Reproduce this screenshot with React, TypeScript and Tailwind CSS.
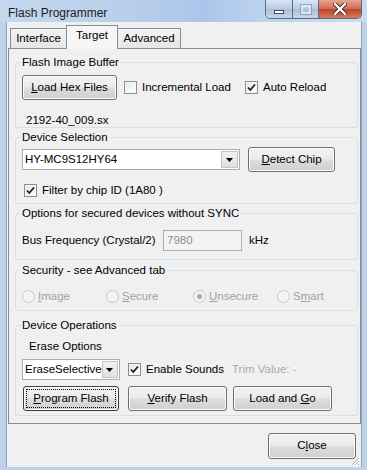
import React from 'react'

const Check = () => (
  <svg width="9" height="9" viewBox="0 0 9 9" className="block">
    <path d="M1 4.5 L3.3 7 L8 1.5" fill="none" stroke="#1c1c1c" strokeWidth="1.8" />
  </svg>
)

const CheckBox = ({ checked }: { checked?: boolean }) => (
  <span className="w-[13px] h-[13px] shrink-0 border border-[#8e8f8f] bg-white flex items-center justify-center">
    <span className="w-[11px] h-[11px] bg-[linear-gradient(135deg,#e6e6e6,#ffffff)] border border-[#f4f4f4] flex items-center justify-center">
      {checked && <Check />}
    </span>
  </span>
)

const Radio = ({ checked }: { checked?: boolean }) => (
  <span className="w-[13px] h-[13px] shrink-0 rounded-full border border-[#c8c8c8] bg-[#f4f4f4] flex items-center justify-center">
    {checked && <span className="w-[5px] h-[5px] rounded-full bg-[#a8a8a8]" />}
  </span>
)

const Btn = ({ children, w, isDefault }: { children: React.ReactNode; w: string; isDefault?: boolean }) => (
  <button
    className={
      'h-[25px] shrink-0 rounded-[3px] border text-[11.5px] text-black shadow-[inset_0_0_0_1px_#fcfcfc] bg-[linear-gradient(#f2f2f2_0%,#ebebeb_48%,#dddddd_52%,#cfcfcf_100%)] p-[3px] ' +
      w +
      (isDefault ? ' border-[#3e3e3e]' : ' border-[#707070]')
    }
  >
    <span
      className={
        'w-full h-full flex items-center justify-center' +
        (isDefault ? ' outline outline-1 outline-dotted outline-black' : '')
      }
    >
      {children}
    </span>
  </button>
)

const Combo = ({ text, w }: { text: string; w: string }) => (
  <div className={'h-[21px] shrink-0 flex items-center bg-white border border-[#abadb3] pl-[2px] pr-[1px] ' + w}>
    <span className="flex-1">{text}</span>
    <span className="w-[17px] h-[17px] border border-[#c4c4c4] bg-[linear-gradient(#f2f2f2,#e0e0e0)] flex items-center justify-center">
      <svg width="7" height="4" viewBox="0 0 7 4">
        <path d="M0 0 H7 L3.5 4 Z" fill="#000" />
      </svg>
    </span>
  </div>
)

const Group = ({ title, h, children, mt }: { title: string; h: string; mt: string; children: React.ReactNode }) => (
  <fieldset className={'border border-[#d5dfe5] rounded-[3px] min-w-0 ' + h + ' ' + mt}>
    <legend className="ml-[4px] px-[2px] leading-[14px]">{title}</legend>
    {children}
  </fieldset>
)

const TitleBar = () => (
  <div className="h-[22px] shrink-0 flex items-start bg-[linear-gradient(90deg,#c4d7ee_0%,#b6cdea_40%,#a9c6ea_55%,#c0d5ee_75%,#cadcf0_100%)]">
    <span className="pl-[8px] pt-[4px] text-[12px] text-[#1b1b1b]">Flash Programmer</span>
    <div className="ml-auto mr-[5px] flex h-[19px] rounded-b-[5px] border border-t-0 border-[#5b6c82] overflow-hidden">
      <div className="w-[27px] flex items-center justify-center border-r border-[#5b6c82] bg-[linear-gradient(#d9e5f3,#b9cbe1_50%,#a9bed8_51%,#c6d6ea)]">
        <span className="mt-[5px] w-[10px] h-[4px] bg-white border border-[#3d4c63]" />
      </div>
      <div className="w-[26px] flex items-center justify-center border-r border-[#5b6c82] bg-[linear-gradient(#d9e5f3,#b9cbe1_50%,#a9bed8_51%,#c6d6ea)]">
        <span className="w-[10px] h-[9px] border-2 border-[#eef3f9] outline outline-1 outline-[#7f90a8] opacity-70" />
      </div>
      <div className="w-[42px] flex items-center justify-center bg-[linear-gradient(#e8a493,#d06a55_50%,#c0412a_51%,#d97a5c)]">
        <svg width="14" height="12" viewBox="0 0 14 12">
          <path d="M2 1 L12 11 M12 1 L2 11" stroke="#3d2a28" strokeWidth="4" strokeLinecap="round" />
          <path d="M2 1 L12 11 M12 1 L2 11" stroke="#ffffff" strokeWidth="2.4" strokeLinecap="round" />
        </svg>
      </div>
    </div>
  </div>
)

export default function App() {
  return (
    <div className="w-[367px] h-[470px] flex flex-col bg-[#bcd2ea] overflow-hidden font-['Liberation_Sans',Arial,sans-serif] text-[11.5px] text-black">
      <TitleBar />
      <div className="flex-1 ml-[6px] mr-[5px] mb-[3px] flex flex-col bg-[#f0f0f0] border-x border-[#8ea3be] relative">
        {/* tabs */}
        <div className="h-[26px] shrink-0 flex items-end pl-[3px] relative z-10">
          <div className="w-[56px] h-[20px] border-l border-t border-[#898c95] bg-[linear-gradient(#f3f3f3,#e6e6e6)] flex items-center justify-center">
            Interface
          </div>
          <div className="w-[52px] h-[24px] -mb-px border-x border-t border-[#898c95] bg-[#f6f6f6] flex items-center justify-center pb-[3px]">
            Target
          </div>
          <div className="w-[63px] h-[20px] border-r border-t border-[#898c95] bg-[linear-gradient(#f3f3f3,#e6e6e6)] flex items-center justify-center">
            Advanced
          </div>
        </div>
        {/* panel */}
        <div className="h-[376px] shrink-0 ml-[1px] border border-[#898c95] bg-[#f0f0f0] flex flex-col pl-[6px] pr-[2px] pt-[6px]">
          <Group title="Flash Image Buffer" h="h-[73px]" mt="mt-0">
            <div className="flex items-center mt-[6px] pl-[6px]">
              <Btn w="w-[95px]">
                <span><u>L</u>oad Hex Files</span>
              </Btn>
              <label className="ml-[7px] w-[121px] flex items-center gap-[5px]">
                <CheckBox />
                Incremental Load
              </label>
              <label className="flex items-center gap-[5px]">
                <CheckBox checked />
                Auto Reload
              </label>
            </div>
            <div className="mt-[13px] pl-[10px] leading-[14px]">2192-40_009.sx</div>
          </Group>

          <Group title="Device Selection" h="h-[74px]" mt="mt-[2px]">
            <div className="flex items-center mt-[3px] pl-[6px]">
              <Combo text="HY-MC9S12HY64" w="w-[218px]" />
              <div className="ml-[8px]">
                <Btn w="w-[87px]">
                  <span><u>D</u>etect Chip</span>
                </Btn>
              </div>
            </div>
            <label className="flex items-center gap-[5px] mt-[11px] pl-[8px] leading-[14px]">
              <CheckBox checked />
              Filter by chip ID (1A80 )
            </label>
          </Group>

          <Group title="Options for secured devices without SYNC" h="h-[54px]" mt="mt-[2px]">
            <div className="flex items-center mt-[10px] pl-[6px]">
              <span className="w-[141px]">Bus Frequency (Crystal/2)</span>
              <div className="w-[79px] h-[21px] border border-[#abadb3] bg-[#f4f4f4] text-[#8d8d8d] flex items-center pl-[3px]">
                7980
              </div>
              <span className="ml-[7px]">kHz</span>
            </div>
          </Group>

          <Group title="Security - see Advanced tab" h="h-[48px]" mt="mt-[3px]">
            <div className="flex items-center mt-[12px] pl-[6px] text-[#a0a0a0] leading-[14px]">
              <label className="w-[84px] flex items-center gap-[3px]">
                <Radio />
                <span><u>I</u>mage</span>
              </label>
              <label className="w-[87px] flex items-center gap-[3px]">
                <Radio />
                <span><u>S</u>ecure</span>
              </label>
              <label className="w-[84px] flex items-center gap-[3px]">
                <Radio checked />
                <span><u>U</u>nsecure</span>
              </label>
              <label className="flex items-center gap-[3px]">
                <Radio />
                <span>S<u>m</u>art</span>
              </label>
            </div>
          </Group>

          <Group title="Device Operations" h="h-[98px]" mt="mt-[7px]">
            <div className="mt-[7px] pl-[13px] leading-[14px]">Erase Options</div>
            <div className="flex items-center mt-[6px] pl-[6px]">
              <Combo text="EraseSelective" w="w-[98px]" />
              <label className="ml-[8px] w-[104px] flex items-center gap-[5px]">
                <CheckBox checked />
                Enable Sounds
              </label>
              <span className="text-[#ababab]">Trim Value: -</span>
            </div>
            <div className="flex items-center mt-[6px] pl-[7px]">
              <Btn w="w-[96px]" isDefault>
                <span><u>P</u>rogram Flash</span>
              </Btn>
              <div className="ml-[9px]">
                <Btn w="w-[99px]">
                  <span><u>V</u>erify Flash</span>
                </Btn>
              </div>
              <div className="ml-[6px]">
                <Btn w="w-[99px]">
                  <span>Load and <u>G</u>o</span>
                </Btn>
              </div>
            </div>
          </Group>
        </div>
        {/* footer */}
        <div className="flex justify-end mt-[9px] mr-[5px]">
          <div className="h-[26px] flex">
            <Btn w="w-[88px] h-[26px]">
              <span>C<u>l</u>ose</span>
            </Btn>
          </div>
        </div>
        <svg width="10" height="10" viewBox="0 0 10 10" className="absolute right-[1px] bottom-[1px]">
          <path d="M9 2 L2 9 M9 5 L5 9 M9 8 L8 9" stroke="#b5b5b5" strokeWidth="1" />
          <path d="M10 3 L3 10 M10 6 L6 10" stroke="#ffffff" strokeWidth="1" />
        </svg>
      </div>
    </div>
  )
}
